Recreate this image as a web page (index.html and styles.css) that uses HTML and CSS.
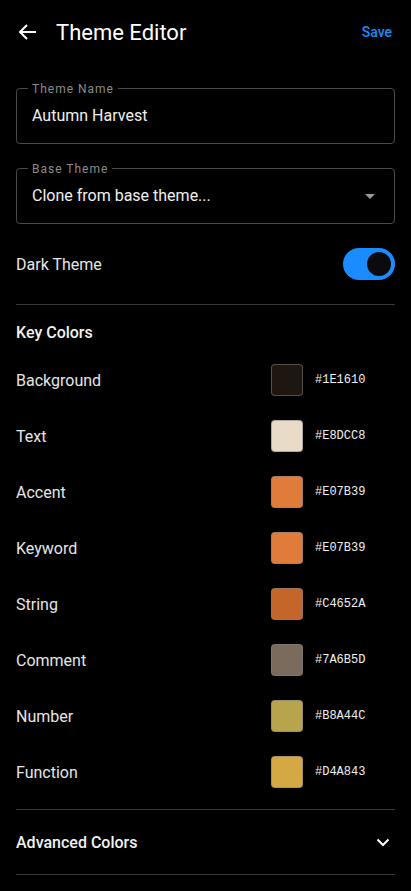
FILE: index.html
```html
<!DOCTYPE html>
<html lang="en">
<head>
  <meta charset="UTF-8">
  <meta name="viewport" content="width=device-width, initial-scale=1.0">
  <link rel="stylesheet" href="styles.css">
  <title>Theme Editor</title>
</head>
<body>
  <header class="topbar">
    <svg class="back" width="24" height="24" viewBox="0 0 24 24"><path d="M20 12H5M11 5l-7 7 7 7" fill="none" stroke="#fff" stroke-width="2"/></svg>
    <h1 class="title">Theme Editor</h1>
    <button class="save">Save</button>
  </header>

  <main class="content">
    <div class="field">
      <span class="field-label">Theme Name</span>
      <div class="field-value">Autumn Harvest</div>
    </div>

    <div class="field">
      <span class="field-label">Base Theme</span>
      <div class="field-value">Clone from base theme...</div>
      <span class="caret"></span>
    </div>

    <div class="switch-row">
      <span class="row-label">Dark Theme</span>
      <span class="switch"><span class="knob"></span></span>
    </div>

    <div class="section">
      <h2 class="section-title">Key Colors</h2>
      <div class="color-row">
        <span class="row-label">Background</span>
        <span class="swatch" style="background:#1E1610"></span>
        <span class="hex">#1E1610</span>
      </div>
      <div class="color-row">
        <span class="row-label">Text</span>
        <span class="swatch" style="background:#E8DCC8"></span>
        <span class="hex">#E8DCC8</span>
      </div>
      <div class="color-row">
        <span class="row-label">Accent</span>
        <span class="swatch" style="background:#E07B39"></span>
        <span class="hex">#E07B39</span>
      </div>
      <div class="color-row">
        <span class="row-label">Keyword</span>
        <span class="swatch" style="background:#E07B39"></span>
        <span class="hex">#E07B39</span>
      </div>
      <div class="color-row">
        <span class="row-label">String</span>
        <span class="swatch" style="background:#C4652A"></span>
        <span class="hex">#C4652A</span>
      </div>
      <div class="color-row">
        <span class="row-label">Comment</span>
        <span class="swatch" style="background:#7A6B5D"></span>
        <span class="hex">#7A6B5D</span>
      </div>
      <div class="color-row">
        <span class="row-label">Number</span>
        <span class="swatch" style="background:#B8A44C"></span>
        <span class="hex">#B8A44C</span>
      </div>
      <div class="color-row">
        <span class="row-label">Function</span>
        <span class="swatch" style="background:#D4A843"></span>
        <span class="hex">#D4A843</span>
      </div>
    </div>

    <div class="advanced">
      <span class="advanced-title">Advanced Colors</span>
      <svg width="16" height="16" viewBox="0 0 16 16"><path d="M2.5 5.5L8 11l5.5-5.5" fill="none" stroke="#fff" stroke-width="2"/></svg>
    </div>
  </main>
</body>
</html>
```

FILE: styles.css
```css
body {
  margin: 0;
  background: #000;
  color: #e8e8e8;
  font-family: Roboto, "Noto Sans", sans-serif;
}

.topbar {
  height: 64px;
  display: flex;
  align-items: center;
  padding: 0 19px 0 16px;
}

.back {
  flex: none;
}

.title {
  margin: 0 0 0 16px;
  flex: 1;
  font-size: 22px;
  font-weight: 400;
  color: #fff;
}

.save {
  background: none;
  border: 0;
  padding: 0;
  color: #1a8cff;
  font-family: inherit;
  font-size: 14px;
  font-weight: 500;
}

.content {
  padding: 0 16px;
}

.field {
  position: relative;
  height: 54px;
  margin-top: 24px;
  border: 1px solid #4a4a4a;
  border-radius: 4px;
  display: flex;
  align-items: center;
  padding: 0 15px;
}

.field-label {
  position: absolute;
  top: -8px;
  left: 11px;
  padding: 0 4px;
  background: #000;
  color: #8c8c8c;
  font-size: 12px;
  line-height: 16px;
  letter-spacing: 1px;
}

.field-value {
  flex: 1;
  padding-bottom: 2px;
  font-size: 16px;
  color: #f0f0f0;
}

.caret {
  width: 0;
  height: 0;
  margin-right: 4px;
  border-left: 5px solid transparent;
  border-right: 5px solid transparent;
  border-top: 5px solid #9a9a9a;
}

.switch-row {
  display: flex;
  align-items: center;
  justify-content: space-between;
  height: 48px;
  margin-top: 16px;
  padding-bottom: 16px;
  border-bottom: 1px solid #3a3a3e;
}

.row-label {
  flex: 1;
  font-size: 16px;
  color: #e6e6e6;
}

.switch {
  width: 52px;
  height: 32px;
  border-radius: 16px;
  background: #1a8cff;
  display: flex;
  align-items: center;
  justify-content: flex-end;
  padding: 0 4px;
  box-sizing: border-box;
}

.knob {
  width: 24px;
  height: 24px;
  border-radius: 50%;
  background: #0b0b0d;
}

.section {
  padding: 16px 0 9px;
  border-bottom: 1px solid #3a3a3e;
}

.section-title {
  margin: 0 0 7px;
  font-size: 16px;
  line-height: 24px;
  font-weight: 500;
  color: #f2f2f2;
}

.color-row {
  height: 56px;
  display: flex;
  align-items: center;
}

.swatch {
  width: 32px;
  height: 32px;
  box-sizing: border-box;
  border: 1px solid rgba(128, 128, 128, 0.55);
  border-radius: 4px;
}

.hex {
  width: 80px;
  margin-left: 12px;
  font-family: "Liberation Mono", monospace;
  font-size: 12px;
  color: #f0f0f0;
}

.advanced {
  height: 64px;
  display: flex;
  align-items: center;
  justify-content: space-between;
  padding-right: 4px;
  border-bottom: 1px solid #3a3a3e;
}

.advanced-title {
  font-size: 16px;
  font-weight: 500;
  color: #f2f2f2;
}
```
